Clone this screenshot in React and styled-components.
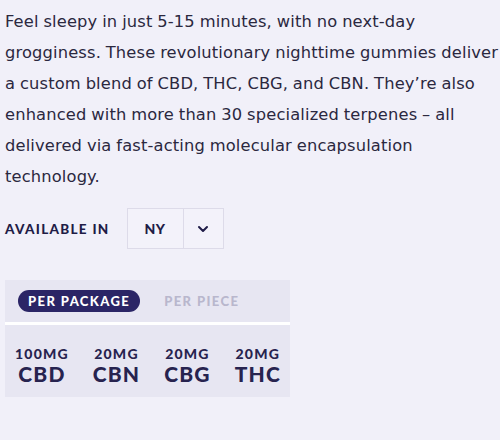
import React, { useState } from "react";
import styled, { createGlobalStyle } from "styled-components";

const GlobalStyle = createGlobalStyle`
  html, body {
    margin: 0;
    padding: 0;
    background: #f1f0f9;
  }
  body {
    font-family: "DejaVu Sans", "Open Sans", sans-serif;
    color: #29263f;
  }
`;

const Page = styled.div`
  padding: 6px 0 0 5px;
  width: 495px;
`;

const Description = styled.p`
  margin: 0;
  max-width: 495px;
  font-size: 16.3px;
  letter-spacing: 0.15px;
  word-spacing: -0.5px;
  line-height: 31px;
  color: #2b283f;
`;

const AvailableRow = styled.div`
  display: flex;
  align-items: center;
  gap: 17px;
  margin-top: 16px;
`;

const Label = styled.span`
  font-family: "Lato", sans-serif;
  font-size: 13.5px;
  font-weight: 900;
  letter-spacing: 1.3px;
  color: #1f1c47;
`;

const Select = styled.div`
  display: flex;
  height: 41px;
  border: 1px solid #dddbe9;
  box-sizing: border-box;
  background: #f3f2fa;
`;

const SelectValue = styled.div`
  width: 55px;
  display: flex;
  align-items: center;
  justify-content: center;
  font-family: "Lato", sans-serif;
  font-size: 14px;
  font-weight: 900;
  letter-spacing: 0.5px;
  color: #1f1c47;
  border-right: 1px solid #dddbe9;
`;

const SelectArrow = styled.div`
  width: 39px;
  display: flex;
  align-items: center;
  justify-content: center;
  color: #1f1c47;
`;

const Panel = styled.div`
  margin-top: 31px;
  width: 285px;
  background: #e7e6f2;
`;

const Tabs = styled.div`
  display: flex;
  align-items: center;
  gap: 24px;
  height: 42px;
  padding: 0 13px;
  border-bottom: 3px solid #ffffff;
`;

const Tab = styled.button`
  border: none;
  cursor: pointer;
  height: 22px;
  padding: 0 ${(p) => (p.$active ? "10px" : "0")};
  border-radius: 11px;
  background: ${(p) => (p.$active ? "#2b2566" : "transparent")};
  color: ${(p) => (p.$active ? "#ffffff" : "#b9b7cd")};
  font-family: "Lato", sans-serif;
  font-size: 13px;
  font-weight: 900;
  letter-spacing: 1.4px;
`;

const Amounts = styled.div`
  display: flex;
  justify-content: space-between;
  padding: 21px 9px 11px 10px;
`;

const Amount = styled.div`
  display: flex;
  flex-direction: column;
  align-items: center;
  color: #27234f;
  font-family: "Lato", sans-serif;
  font-weight: 900;
`;

const Dose = styled.span`
  font-size: 14px;
  line-height: 16px;
  letter-spacing: 1.2px;
`;

const Compound = styled.span`
  font-size: 21px;
  line-height: 24px;
  letter-spacing: 1.2px;
`;

const amounts = [
  { dose: "100MG", name: "CBD" },
  { dose: "20MG", name: "CBN" },
  { dose: "20MG", name: "CBG" },
  { dose: "20MG", name: "THC" },
];

export default function App() {
  const [tab, setTab] = useState("package");

  return (
    <Page>
      <GlobalStyle />
      <Description>
        Feel sleepy in just 5-15 minutes, with no next-day grogginess. These
        revolutionary nighttime gummies deliver a custom blend of CBD, THC,
        CBG, and CBN. They’re also enhanced with more than 30 specialized
        terpenes – all delivered via fast-acting molecular encapsulation
        technology.
      </Description>

      <AvailableRow>
        <Label>AVAILABLE IN</Label>
        <Select>
          <SelectValue>NY</SelectValue>
          <SelectArrow>
            <svg width="12" height="8" viewBox="0 0 12 8" fill="none">
              <path
                d="M2 2l4 4 4-4"
                stroke="currentColor"
                strokeWidth="2"
                strokeLinecap="round"
                strokeLinejoin="round"
              />
            </svg>
          </SelectArrow>
        </Select>
      </AvailableRow>

      <Panel>
        <Tabs>
          <Tab $active={tab === "package"} onClick={() => setTab("package")}>
            PER PACKAGE
          </Tab>
          <Tab $active={tab === "piece"} onClick={() => setTab("piece")}>
            PER PIECE
          </Tab>
        </Tabs>
        <Amounts>
          {amounts.map((a) => (
            <Amount key={a.name}>
              <Dose>{a.dose}</Dose>
              <Compound>{a.name}</Compound>
            </Amount>
          ))}
        </Amounts>
      </Panel>
    </Page>
  );
}
